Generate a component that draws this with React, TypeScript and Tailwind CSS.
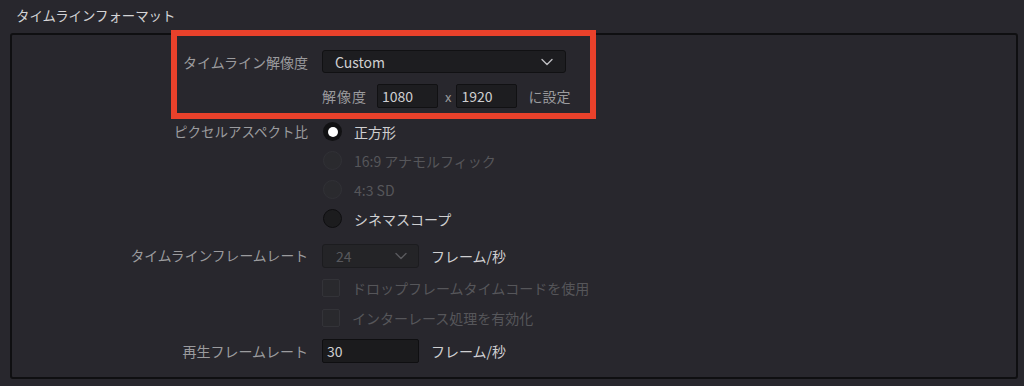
import React from "react";

const font = { fontFamily: '"Noto Sans CJK JP", "Noto Sans", sans-serif' };

function Chevron({ color }: { color: string }) {
  return (
    <svg width="12" height="8" viewBox="0 0 12 8" fill="none">
      <polyline points="1,1.5 6,6.5 11,1.5" stroke={color} strokeWidth="1.4" strokeLinecap="round" strokeLinejoin="round" />
    </svg>
  );
}

function Label({ children, size }: { children: React.ReactNode; size: string }) {
  return (
    <div className={"w-[296px] shrink-0 text-right text-[#9b9b9e] leading-none " + size}>
      {children}
    </div>
  );
}

function Radio({ state, text }: { state: "on" | "off" | "disabled"; text: string }) {
  return (
    <div className="flex items-center h-[29px]">
      <div className="w-[296px] shrink-0" />
      <div className="ml-[15px] flex items-center">
        {state === "on" && (
          <div className="w-[19px] h-[19px] rounded-full bg-[#111113] flex items-center justify-center">
            <div className="w-[10px] h-[10px] rounded-full bg-white" />
          </div>
        )}
        {state === "off" && (
          <div className="w-[19px] h-[19px] rounded-full bg-[#1c1c1e] border border-[#0e0e10]" />
        )}
        {state === "disabled" && (
          <div className="w-[19px] h-[19px] rounded-full bg-[#2a2a2e] border border-[#313136]" />
        )}
        <span
          className={
            "ml-[12px] text-[14px] leading-none " +
            (state === "disabled" ? "text-[#56565a]" : "text-[#cfcfd1]")
          }
        >
          {text}
        </span>
      </div>
    </div>
  );
}

function Check({ text }: { text: string }) {
  return (
    <div className="flex items-center h-[30px]">
      <div className="w-[296px] shrink-0" />
      <div className="ml-[14px] flex items-center">
        <div className="w-[18px] h-[18px] rounded-[2px] bg-[#29292d] border border-[#333338]" />
        <span className="ml-[12px] text-[14px] leading-none text-[#56565a]">{text}</span>
      </div>
    </div>
  );
}

export default function App() {
  return (
    <div className="relative w-[1024px] h-[386px] bg-[#28272d] overflow-hidden" style={font}>
      <div className="h-[33px] pl-[16px] pt-[8px] text-[13.4px] leading-[14px] text-[#d4d4d6]">
        タイムラインフォーマット
      </div>
      <div className="mx-[10px] w-[1008px] h-[346px] border-2 border-[#0f0f11] rounded-[3px] bg-[#28272d] pt-[15px]">
        {/* Resolution */}
        <div className="flex items-center h-[23px]">
          <Label size="text-[14px]">タイムライン解像度</Label>
          <div className="ml-[14px] w-[244px] h-[23px] rounded-[3px] bg-[#1d1d20] border border-[#111113] flex items-center justify-between pl-[12px] pr-[12px]">
            <span className="text-[14px] text-[#cfcfd1] leading-none">Custom</span>
            <Chevron color="#bdbdc0" />
          </div>
        </div>
        <div className="flex items-center h-[24px] mt-[11px]">
          <div className="w-[296px] shrink-0" />
          <span className="ml-[14px] text-[14px] text-[#9b9b9e] leading-none tracking-[1px]">解像度</span>
          <div className="ml-[10px] w-[61px] h-[24px] rounded-[2px] bg-[#1d1d20] border border-[#111113] flex items-center pl-[4px]">
            <span className="text-[14px] text-[#cfcfd1] leading-none">1080</span>
          </div>
          <span className="ml-[7px] text-[13px] text-[#9b9b9e] leading-none">x</span>
          <div className="ml-[5px] w-[61px] h-[24px] rounded-[2px] bg-[#1d1d20] border border-[#111113] flex items-center pl-[4px]">
            <span className="text-[14px] text-[#cfcfd1] leading-none">1920</span>
          </div>
          <span className="ml-[11px] text-[14px] text-[#9b9b9e] leading-none">に設定</span>
        </div>

        {/* Pixel aspect */}
        <div className="mt-[9px]">
          <div className="flex items-center h-[29px]">
            <Label size="text-[13.5px]">ピクセルアスペクト比</Label>
            <div className="ml-[15px] flex items-center">
              <div className="w-[19px] h-[19px] rounded-full bg-[#111113] flex items-center justify-center">
                <div className="w-[10px] h-[10px] rounded-full bg-white" />
              </div>
              <span className="ml-[12px] text-[14px] leading-none text-[#cfcfd1]">正方形</span>
            </div>
          </div>
          <Radio state="disabled" text="16:9 アナモルフィック" />
          <Radio state="disabled" text="4:3 SD" />
          <Radio state="off" text="シネマスコープ" />
        </div>

        {/* Timeline frame rate */}
        <div className="flex items-center h-[24px] mt-[11px]">
          <Label size="text-[13.8px]">タイムラインフレームレート</Label>
          <div className="ml-[14px] w-[97px] h-[24px] rounded-[3px] bg-[#242427] border border-[#1c1c1f] flex items-center justify-between pl-[13px] pr-[11px]">
            <span className="text-[14px] text-[#58585c] leading-none">24</span>
            <Chevron color="#5a5a5e" />
          </div>
          <span className="ml-[12px] text-[14px] text-[#cfcfd1] leading-none">フレーム/秒</span>
        </div>
        <div className="mt-[5px]">
          <Check text="ドロップフレームタイムコードを使用" />
          <Check text="インターレース処理を有効化" />
        </div>

        {/* Playback frame rate */}
        <div className="flex items-center h-[24px] mt-[6px]">
          <Label size="text-[14px]">再生フレームレート</Label>
          <div className="ml-[14px] w-[97px] h-[24px] rounded-[2px] bg-[#1b1b1d] border border-[#0f0f11] flex items-center pl-[4px]">
            <span className="text-[14px] text-[#cfcfd1] leading-none">30</span>
          </div>
          <span className="ml-[12px] text-[14px] text-[#cfcfd1] leading-none">フレーム/秒</span>
        </div>
      </div>

      {/* red annotation */}
      <div className="absolute left-[171px] top-[30px] w-[425px] h-[89px] border-[6px] border-[#e9412b] pointer-events-none" />
    </div>
  );
}
